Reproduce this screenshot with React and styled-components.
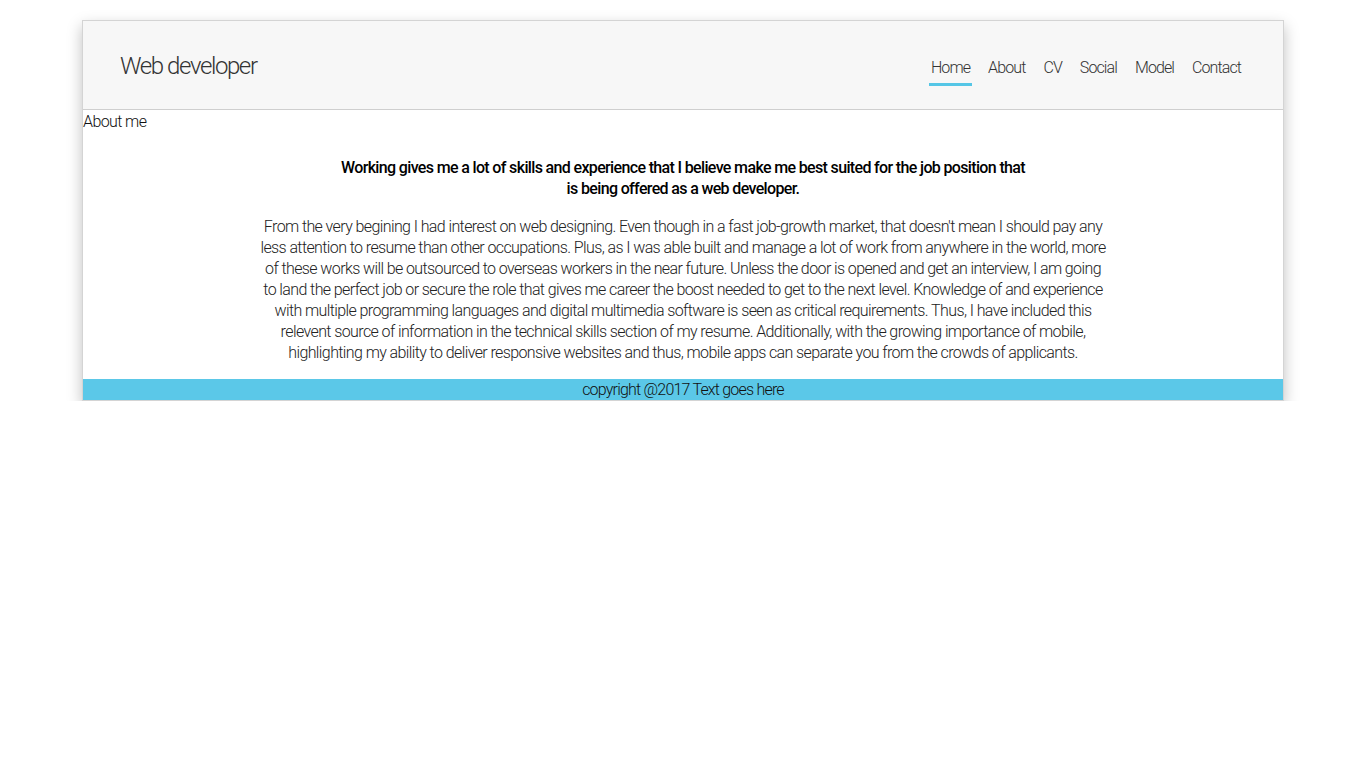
import React from "react";
import styled, { createGlobalStyle } from "styled-components";

const GlobalStyle = createGlobalStyle`
  body {
    margin: 0;
    background: #fff;
    font-family: Roboto, "Liberation Sans", sans-serif;
    color: #222;
  }
`;

const Page = styled.div`
  padding-top: 20px;
`;

const Wrapper = styled.div`
  width: 1200px;
  margin: 0 auto;
  border: 1px solid #d4d4d4;
  box-shadow: 0 6px 14px rgba(0, 0, 0, 0.25);
  background: #fff;
`;

const Header = styled.header`
  height: 88px;
  background: #f7f7f7;
  border-bottom: 1px solid #cfcfcf;
  display: flex;
  align-items: center;
  justify-content: space-between;
  padding: 0 40px 0 37px;
`;

const Logo = styled.div`
  font-size: 24px;
  font-weight: 300;
  letter-spacing: -1.4px;
  color: #333;
  margin-top: 1px;
`;

const Nav = styled.nav`
  display: flex;
  gap: 14px;
  margin-top: 14px;
`;

const NavItem = styled.a`
  font-size: 16px;
  font-weight: 300;
  letter-spacing: -0.9px;
  color: #333;
  text-decoration: none;
  padding: 0 2px 6px;
  border-bottom: 3px solid ${(p) => (p.$active ? "#55c6e6" : "transparent")};
`;

const SectionLabel = styled.div`
  font-size: 16px;
  font-weight: 300;
  letter-spacing: -0.6px;
  color: #111;
  padding-top: 2px;
  line-height: 20px;
`;

const Content = styled.main`
  display: flex;
  flex-direction: column;
  align-items: center;
  padding: 25px 0 16px;
`;

const Lead = styled.h2`
  margin: 0;
  max-width: 690px;
  text-align: center;
  font-size: 16px;
  font-weight: 500;
  letter-spacing: -0.65px;
  line-height: 21px;
  color: #000;
`;

const Body = styled.p`
  margin: 17px 0 0;
  max-width: 849px;
  text-align: center;
  font-size: 16px;
  font-weight: 300;
  letter-spacing: -0.6px;
  line-height: 21px;
  color: #222;
`;

const Footer = styled.footer`
  background: #5bc8e8;
  height: 21px;
  line-height: 21px;
  text-align: center;
  font-size: 16px;
  font-weight: 300;
  letter-spacing: -0.8px;
  color: #111;
`;

const navItems = ["Home", "About", "CV", "Social", "Model", "Contact"];

export default function App() {
  return (
    <>
      <GlobalStyle />
      <Page>
        <Wrapper>
          <Header>
            <Logo>Web developer</Logo>
            <Nav>
              {navItems.map((item, i) => (
                <NavItem key={item} href="#" $active={i === 0}>
                  {item}
                </NavItem>
              ))}
            </Nav>
          </Header>
          <SectionLabel>About me</SectionLabel>
          <Content>
            <Lead>
              Working gives me a lot of skills and experience that I believe
              make me best suited for the job position that is being offered as
              a web developer.
            </Lead>
            <Body>
              From the very begining I had interest on web designing. Even
              though in a fast job-growth market, that doesn't mean I should pay
              any less attention to resume than other occupations. Plus, as I
              was able built and manage a lot of work from anywhere in the
              world, more of these works will be outsourced to overseas workers
              in the near future. Unless the door is opened and get an
              interview, I am going to land the perfect job or secure the role
              that gives me career the boost needed to get to the next level.
              Knowledge of and experience with multiple programming languages
              and digital multimedia software is seen as critical requirements.
              Thus, I have included this relevent source of information in the
              technical skills section of my resume. Additionally, with the
              growing importance of mobile, highlighting my ability to deliver
              responsive websites and thus, mobile apps can separate you from
              the crowds of applicants.
            </Body>
          </Content>
          <Footer>copyright @2017 Text goes here</Footer>
        </Wrapper>
      </Page>
    </>
  );
}
